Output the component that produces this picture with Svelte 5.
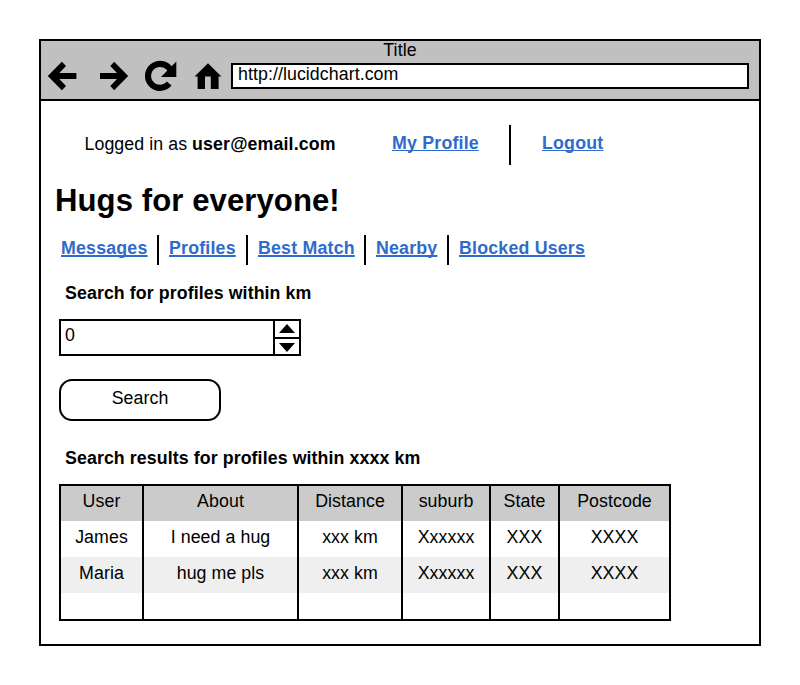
<script>
  const nav = [
    { label: 'Messages', width: 96 },
    { label: 'Profiles', width: 87 },
    { label: 'Best Match', width: 116 },
    { label: 'Nearby', width: 81 },
    { label: 'Blocked Users', width: 140 }
  ];
  const columns = [
    { title: 'User', width: 83 },
    { title: 'About', width: 155 },
    { title: 'Distance', width: 104 },
    { title: 'suburb', width: 88 },
    { title: 'State', width: 69 },
    { title: 'Postcode', width: 111 }
  ];
  const rows = [
    ['James', 'I need a hug', 'xxx km', 'Xxxxxx', 'XXX', 'XXXX'],
    ['Maria', 'hug me pls', 'xxx km', 'Xxxxxx', 'XXX', 'XXXX'],
    ['', '', '', '', '', '']
  ];
  let distance = $state(0);
</script>

<main class="window">
  <header class="chrome">
    <div class="title">Title</div>
    <div class="toolbar">
      <svg class="icons" width="190" height="36" viewBox="41 58 190 36" aria-hidden="true">
        <path d="M76.4 73V79H59.3L66 86L61.8 90.2L47.8 76L61.8 61.8L66 66L59.3 73Z" />
        <path d="M100 73V79H117L110.3 86L114.2 90.2L128.2 76L114.2 61.8L110.3 66L117 73Z" />
        <path d="M171.4 72A12 12 0 1 0 169.2 83.6" fill="none" stroke="#000" stroke-width="6.2" />
        <path d="M176.3 61.6V77H161Z" />
        <path d="M208 63.2L221.4 76.5H218.6V89H210.8V76.5H205V89H197.6V76.5H194.6Z" />
      </svg>
      <div class="address">http://lucidchart.com</div>
    </div>
  </header>

  <div class="content">
    <div class="account">
      <span class="who">Logged in as <b>user@email.com</b></span>
      <a href="#profile">My Profile</a>
      <i class="bar"></i>
      <a href="#logout">Logout</a>
    </div>
    <h1>Hugs for everyone!</h1>
    <nav>
      {#each nav as item}
        <div class="nav-item" style:width="{item.width}px"><a href="#nav">{item.label}</a></div>
      {/each}
    </nav>
    <h2>Search for profiles within km</h2>
    <div class="stepper">
      <span class="value">{distance}</span>
      <div class="steps">
        <button aria-label="Increase" onclick={() => distance++}>
          <svg width="16" height="9" viewBox="0 0 16 9"><path d="M8 0L16 9H0Z" /></svg>
        </button>
        <button aria-label="Decrease" onclick={() => distance--}>
          <svg width="16" height="9" viewBox="0 0 16 9"><path d="M0 0H16L8 9Z" /></svg>
        </button>
      </div>
    </div>
    <button class="search">Search</button>
    <h2 class="results">Search results for profiles within xxxx km</h2>
    <table>
      <colgroup>
        {#each columns as c}<col style:width="{c.width}px" />{/each}
      </colgroup>
      <thead>
        <tr>{#each columns as c}<th>{c.title}</th>{/each}</tr>
      </thead>
      <tbody>
        {#each rows as row}
          <tr>{#each row as cell}<td>{cell}</td>{/each}</tr>
        {/each}
      </tbody>
    </table>
  </div>
</main>

<style>
  :global(body) { background: #fff; }
  .window {
    box-sizing: border-box;
    width: 722px;
    height: 607px;
    margin: 39px 0 0 39px;
    border: 2px solid #000;
    font: 17.78px/20px "Liberation Sans", Arial, sans-serif;
    letter-spacing: 0.07px;
    color: #000;
    display: flex;
    flex-direction: column;
  }
  .chrome {
    box-sizing: border-box;
    height: 60px;
    background: #c0c0c0;
    border-bottom: 2px solid #000;
  }
  .title { height: 17px; line-height: 18px; text-align: center; }
  .toolbar { display: flex; align-items: flex-start; }
  .icons { display: block; flex: none; }
  .address {
    box-sizing: border-box;
    width: 518px;
    height: 26px;
    margin-top: 5px;
    padding-left: 5px;
    border: 2px solid #000;
    background: #fff;
    line-height: 18px;
  }
  .content { display: flex; flex-direction: column; align-items: flex-start; }
  .account { display: flex; height: 40px; margin-top: 24px; }
  .who { width: 307.5px; padding: 9px 0 0 43.5px; }
  .who b { letter-spacing: 0.13px; }
  .account a { padding-top: 8px; width: 117px; text-decoration-thickness: 1px; letter-spacing: 0.2px; }
  .bar { width: 2px; height: 40px; background: #000; margin-right: 31px; }
  a {
    color: #2f6bcc;
    font-weight: bold;
    letter-spacing: 0.2px;
    text-decoration: underline 2px;
    text-decoration-skip-ink: none;
    text-underline-offset: 1px;
    white-space: nowrap;
  }
  h1 { font-size: 31.1px; line-height: 36px; letter-spacing: 0.08px; margin: 18px 0 0 14px; }
  nav { display: flex; height: 30px; margin: 16px 0 0 20px; }
  .nav-item { padding-top: 3px; height: 27px; border-right: 2px solid #000; }
  .nav-item + .nav-item { text-indent: 10px; }
  .nav-item:last-child { border-right: 0; }
  h2 { font-size: 17.78px; line-height: 20px; letter-spacing: 0.09px; margin: 18px 0 0 24px; }
  .stepper {
    display: flex;
    box-sizing: border-box;
    width: 242px;
    height: 37px;
    margin: 16px 0 0 18px;
    border: 2px solid #000;
  }
  .value { flex: 1; padding: 4px 0 0 4px; }
  .steps { width: 24px; border-left: 2px solid #000; display: flex; flex-direction: column; }
  .steps button {
    box-sizing: border-box;
    display: flex;
    align-items: flex-start;
    justify-content: center;
    height: 16px;
    padding: 2.5px 0 0;
    border: 0;
    background: #fff;
  }
  .steps button + button { border-top: 2px solid #000; height: 17px; padding-top: 4px; }
  .search {
    box-sizing: border-box;
    width: 162px;
    height: 42px;
    margin: 23px 0 0 18px;
    padding: 0 0 5px;
    border: 2px solid #000;
    border-radius: 13px;
    background: #fff;
    color: #000;
    font: inherit;
    letter-spacing: inherit;
  }
  .results { margin-top: 27px; }
  table {
    table-layout: fixed;
    width: 612px;
    margin: 16px 0 0 18px;
    border-collapse: collapse;
    border: 2px solid #000;
  }
  th, td {
    box-sizing: border-box;
    height: 36px;
    padding: 0 0 4px;
    border: solid #000;
    border-width: 0 2px;
    font-weight: normal;
    text-align: center;
  }
  th { background: #cbcbcb; padding-bottom: 5px; }
  tbody tr:nth-child(2) td { background: #efefef; }
  tbody tr:last-child td { height: 27px; padding: 0; }
</style>
